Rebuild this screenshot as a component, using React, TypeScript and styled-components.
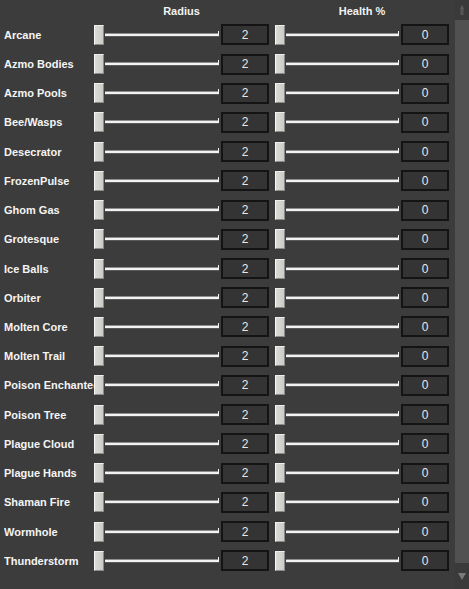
import React from 'react';
import styled, { createGlobalStyle } from 'styled-components';

const GlobalStyle = createGlobalStyle`
    html, body {
        margin: 0;
        padding: 0;
        background: #3c3c3c;
    }
`;

const effects = [
    'Arcane', 'Azmo Bodies', 'Azmo Pools', 'Bee/Wasps', 'Desecrator', 'FrozenPulse',
    'Ghom Gas', 'Grotesque', 'Ice Balls', 'Orbiter', 'Molten Core', 'Molten Trail',
    'Poison Enchanted', 'Poison Tree', 'Plague Cloud', 'Plague Hands', 'Shaman Fire',
    'Wormhole', 'Thunderstorm',
];

const Panel = styled.div`
    width: 469px;
    height: 589px;
    display: flex;
    background: #3c3c3c;
    font-family: "Liberation Sans", Arial, sans-serif;
    overflow: hidden;
`;

const Content = styled.div`
    flex: 1;
    padding-left: 4px;
`;

const Grid = styled.div`
    display: grid;
    grid-template-columns: 90px 175px 180px;
    grid-auto-rows: 29.22px;
    grid-template-rows: 20.2px;
    align-items: center;
`;

const Header = styled.div<{ $inset?: number }>`
    color: #f2f2f2;
    font-size: 11px;
    font-weight: bold;
    text-align: center;
    align-self: start;
    padding-top: 5px;
    padding-left: ${(p) => p.$inset ?? 0}px;
`;

const Label = styled.div`
    color: #f4f4f4;
    font-size: 11px;
    font-weight: bold;
    white-space: nowrap;
    overflow: hidden;
    padding-right: 2px;
`;

const SliderGroup = styled.div<{ $inset?: number }>`
    display: flex;
    align-items: center;
    padding-left: ${(p) => p.$inset ?? 0}px;
`;

const Handle = styled.div`
    width: 10px;
    height: 20px;
    box-sizing: border-box;
    background: linear-gradient(to right, #dadad6, #cbcbc7);
    border-left: 1px solid #f6f6f4;
    border-top: 1px solid #eeeeec;
    border-right: 1px solid #8a8a88;
    border-bottom: 1px solid #8a8a88;
`;

const Track = styled.div`
    flex: 1;
    position: relative;
    height: 2px;
    margin: 0 1px 0 1px;
    border-top: 1px solid #8e8e8e;
    border-bottom: 1px solid #5a5a5a;
    background: #f2f2f2;

    &::after {
        content: '';
        position: absolute;
        right: 0;
        top: -3px;
        width: 1px;
        height: 5px;
        background: #f2f2f2;
    }
`;

const ValueBox = styled.div`
    width: 48px;
    height: 21px;
    box-sizing: border-box;
    margin-left: 1px;
    border: 2px solid #141414;
    background: #343434;
    color: #e8e8e8;
    font-size: 12px;
    display: flex;
    align-items: center;
    justify-content: center;
`;

const Scrollbar = styled.div`
    width: 14px;
    display: flex;
    flex-direction: column;
    background: #3a3a3a;
`;

const ArrowButton = styled.div<{ $h: number }>`
    height: ${(p) => p.$h}px;
    display: flex;
    align-items: center;
    justify-content: center;
`;

const Thumb = styled.div`
    flex: 1;
    background: #515151;
`;

const Slider = ({ value, inset }: { value: number; inset?: number }) => (
    <SliderGroup $inset={inset}>
        <Handle />
        <Track />
        <ValueBox>{value}</ValueBox>
    </SliderGroup>
);

export default function App() {
    return (
        <Panel>
            <GlobalStyle />
            <Content>
                <Grid>
                    <div />
                    <Header>Radius</Header>
                    <Header $inset={6}>Health %</Header>
                    {effects.map((name) => (
                        <React.Fragment key={name}>
                            <Label>{name}</Label>
                            <Slider value={2} />
                            <Slider value={0} inset={6} />
                        </React.Fragment>
                    ))}
                </Grid>
            </Content>
            <Scrollbar>
                <ArrowButton $h={20}>
                    <svg width="6" height="12" viewBox="0 0 6 12">
                        <path d="M3 1 L5 5 L1 5 Z" fill="#5e5e5e" />
                        <rect x="1.5" y="5" width="3" height="6" fill="#565656" />
                    </svg>
                </ArrowButton>
                <Thumb />
                <ArrowButton $h={26}>
                    <svg width="8" height="8" viewBox="0 0 8 8">
                        <path d="M0 1 L8 1 L4 8 Z" fill="#7a7a7a" />
                    </svg>
                </ArrowButton>
            </Scrollbar>
        </Panel>
    );
}
